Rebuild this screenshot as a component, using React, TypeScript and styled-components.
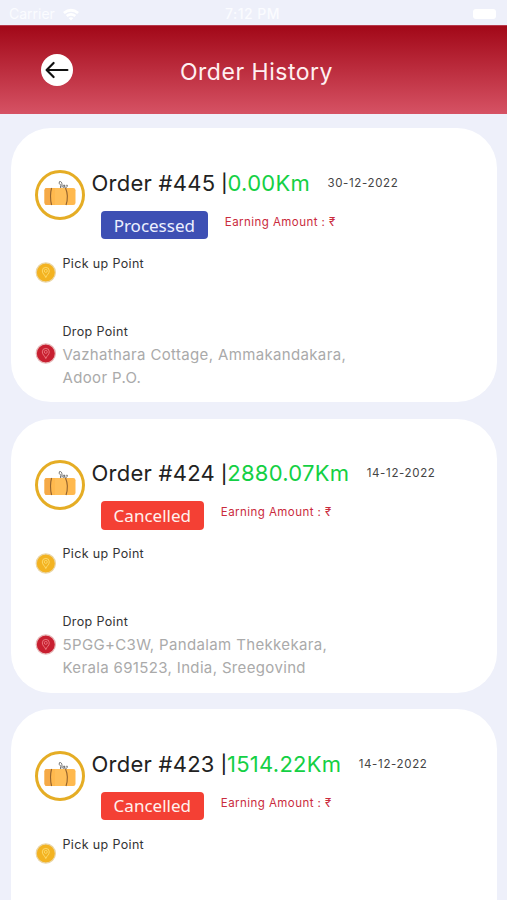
import React from "react";
import styled, { createGlobalStyle } from "styled-components";

const GlobalStyle = createGlobalStyle`
  * { box-sizing: border-box; }
  html, body { margin: 0; background: #eef0fa; }
  body { font-family: Inter, "Noto Sans", sans-serif; overflow: hidden; }
`;

const Screen = styled.div`
  width: 507px;
  height: 900px;
  overflow: hidden;
  background: #eef0fa;
`;

const StatusBar = styled.div`
  display: grid;
  grid-template-columns: 1fr auto 1fr;
  align-items: center;
  height: 25px;
  padding: 3px 11px 0 9px;
  color: #fbfcff;
  font-size: 14px;
  line-height: 20px;
`;

const Carrier = styled.div`
  display: flex;
  align-items: center;
  gap: 7px;
`;

const Clock = styled.div`
  font-weight: 500;
  letter-spacing: 0.5px;
`;

const Battery = styled.div`
  justify-self: end;
  width: 23px;
  height: 10px;
  border-radius: 3px;
  background: #fff;
`;

const Header = styled.header`
  display: grid;
  grid-template-columns: 32px 1fr 32px;
  align-items: center;
  height: 89px;
  padding: 0 35px 0 41px;
  border-top: 1px solid #b53a4c;
  background: linear-gradient(#a20818, #d65264);
`;

const BackButton = styled.button`
  display: grid;
  place-items: center;
  width: 32px;
  height: 32px;
  padding: 0;
  border: 0;
  border-radius: 50%;
  background: #fff;
`;

const Title = styled.h1`
  margin: 4px 0 0;
  color: #fff0f1;
  font-size: 23px;
  font-weight: 400;
  line-height: 28px;
  letter-spacing: 0.52px;
  text-align: center;
`;

const OrderList = styled.main`
  display: flex;
  flex-direction: column;
  gap: 16.2px;
  padding: 14.2px 10.5px 0 11px;
`;

const Card = styled.article`
  flex: none;
  height: 274.2px;
  padding: 41.8px 24px 0;
  border-radius: 40px;
  background: #fff;
`;

const Summary = styled.div`
  display: flex;
  gap: 6.5px;
  height: 81px;
`;

const BagRing = styled.div`
  display: grid;
  flex: none;
  place-items: center;
  width: 50px;
  height: 50px;
  border: 3px solid #e5ad25;
  border-radius: 50%;
`;

const Heading = styled.div`
  display: flex;
  align-items: center;
  height: 26px;
  white-space: nowrap;
`;

const OrderNumber = styled.span`
  color: #222;
  font-size: 22px;
  letter-spacing: 0.25px;
`;

const Separator = styled.span`
  margin-left: 6px;
  padding-top: 3px;
  color: #222;
  font-size: 18px;
  font-weight: 500;
  line-height: 24px;
`;

const Distance = styled.span`
  color: #14d044;
  font-size: 22px;
  letter-spacing: 0.28px;
`;

const OrderDate = styled.time`
  margin-left: 17.3px;
  color: #444;
  font-size: 11.5px;
  letter-spacing: 0.65px;
`;

const StatusRow = styled.div`
  display: flex;
  gap: 17px;
  padding: 15px 0 0 9.3px;
`;

const StatusBadge = styled.span<{ $cancelled: boolean }>`
  display: flex;
  align-items: center;
  justify-content: center;
  width: ${(p) => (p.$cancelled ? 103 : 107)}px;
  height: 28.5px;
  border-radius: 4px;
  background: ${(p) => (p.$cancelled ? "#f44034" : "#3e50b4")};
  color: ${(p) => (p.$cancelled ? "#fff1ee" : "#edf0ff")};
  font-family: "Noto Sans", sans-serif;
  font-size: 17px;
`;

const Earning = styled.span`
  padding-top: 4px;
  color: #ca2b3d;
  font-size: 11.5px;
  line-height: 14px;
  letter-spacing: 0.45px;
`;

const Stop = styled.section<{ $height: number; $pin: number }>`
  display: flex;
  gap: 6.5px;
  height: ${(p) => p.$height}px;

  > svg {
    flex: none;
    margin-top: ${(p) => p.$pin}px;
  }
`;

const StopLabel = styled.div`
  margin: 4px 0 3px;
  color: #333;
  font-size: 12.5px;
  line-height: 17px;
  letter-spacing: 0.35px;
`;

const Address = styled.div`
  color: #aaa;
  font-size: 15px;
  line-height: 23px;
  letter-spacing: 0.35px;
  white-space: nowrap;
`;

const WifiIcon = () => (
  <svg width="18" height="13" viewBox="0 0 18 13" fill="#fff">
    <path d="M1 4Q9-2.5 17 4L15.2 6Q9 1.3 2.8 6Z" />
    <path d="M3.8 7Q9 3 14.2 7L12.4 9Q9 6.5 5.6 9Z" />
    <path d="M6.6 10Q9 8.3 11.4 10L9 12.6Z" />
  </svg>
);

const BackIcon = () => (
  <svg width="24" height="18" viewBox="0 0 24 18" fill="none" stroke="#111" strokeWidth="2.2" strokeLinecap="round" strokeLinejoin="round">
    <path d="M22.4 9H2.2M8.6 2L1.6 9L8.6 16" />
  </svg>
);

const BagIcon = () => (
  <svg width="34" height="28" viewBox="0 0 34 28" fill="none">
    <path d="M18 4.5Q15 2 16.5 0.6Q19 0 19 4V6.5M17.5 4.5V7M20 6Q20 3.5 21.5 4Q22.5 7 20 7M22.5 5Q25 3 24.3 5.5L22 7.3" stroke="#666" strokeWidth=".9" />
    <rect x="1.5" y="7" width="31" height="17" rx="2.2" fill="#ffb94e" />
    <path d="M3.7 7H8.5Q6.4 15 8.5 24H3.7Q1.5 24 1.5 21.8V9.2Q1.5 7 3.7 7Z" fill="#f5a947" />
    <path d="M12 7H23Q25.5 15 23 24H12Z" fill="#ffbf59" />
    <path d="M8.6 7Q6.4 15 8.6 24M22.5 7Q26 15 23 24" stroke="#93632e" strokeWidth="1.1" />
  </svg>
);

const PinIcon = ({ fill, ring, line }: { fill: string; ring: string; line: string }) => (
  <svg width="21" height="21" viewBox="0 0 21 21" fill="none">
    <circle cx="10.8" cy="10.5" r="9.6" fill={fill} stroke={ring} strokeWidth="1.2" />
    <path d="M10.8 15.5C10.1 13 7.3 11.7 7.3 8.9A3.5 3.5 0 0 1 14.3 8.9C14.3 11.7 11.5 13 10.8 15.5Z" stroke={line} strokeWidth=".8" />
    <circle cx="10.8" cy="8.9" r="1.5" stroke={line} strokeWidth=".7" />
  </svg>
);

interface Order {
  id: number;
  distance: string;
  date: string;
  status: "Processed" | "Cancelled";
  drop: string[];
}

const orders: Order[] = [
  { id: 445, distance: "0.00Km", date: "30-12-2022", status: "Processed", drop: ["Vazhathara Cottage, Ammakandakara,", "Adoor P.O."] },
  { id: 424, distance: "2880.07Km", date: "14-12-2022", status: "Cancelled", drop: ["5PGG+C3W, Pandalam Thekkekara,", "Kerala 691523, India, Sreegovind"] },
  { id: 423, distance: "1514.22Km", date: "14-12-2022", status: "Cancelled", drop: [] },
];

const OrderCard = ({ order }: { order: Order }) => (
  <Card>
    <Summary>
      <BagRing><BagIcon /></BagRing>
      <div>
        <Heading>
          <OrderNumber>Order #{order.id}</OrderNumber>
          <Separator>|</Separator>
          <Distance>{order.distance}</Distance>
          <OrderDate>{order.date}</OrderDate>
        </Heading>
        <StatusRow>
          <StatusBadge $cancelled={order.status === "Cancelled"}>{order.status}</StatusBadge>
          <Earning>Earning Amount : ₹</Earning>
        </StatusRow>
      </div>
    </Summary>
    <Stop $height={68} $pin={11.5}>
      <PinIcon fill="#f3b321" ring="#ead5a5" line="#ffe27c" />
      <StopLabel>Pick up Point</StopLabel>
    </Stop>
    {order.drop.length > 0 && (
      <Stop $height={80} $pin={24.5}>
        <PinIcon fill="#c81f30" ring="#e6b8b8" line="#f28b91" />
        <div>
          <StopLabel>Drop Point</StopLabel>
          {order.drop.map((line) => <Address key={line}>{line}</Address>)}
        </div>
      </Stop>
    )}
  </Card>
);

export default function App() {
  return (
    <Screen>
      <GlobalStyle />
      <StatusBar>
        <Carrier>Carrier <WifiIcon /></Carrier>
        <Clock>7:12 PM</Clock>
        <Battery />
      </StatusBar>
      <Header>
        <BackButton aria-label="Back"><BackIcon /></BackButton>
        <Title>Order History</Title>
      </Header>
      <OrderList>
        {orders.map((order) => <OrderCard key={order.id} order={order} />)}
      </OrderList>
    </Screen>
  );
}
